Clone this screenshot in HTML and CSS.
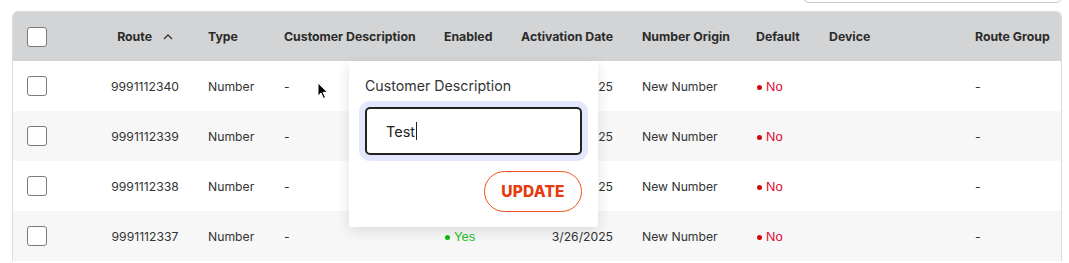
FILE: index.html
```html
<!DOCTYPE html>
<html lang="en">
<head>
    <meta charset="UTF-8">
    <meta name="viewport" content="width=device-width, initial-scale=1.0">
    <title>Routes</title>
    <link rel="stylesheet" href="styles.css">
</head>
<body>
    <div class="page">
        <div class="toolbar">
            <div class="search"></div>
        </div>

        <div class="routes">
            <div class="row head">
                <div class="cell check"><span class="box"></span></div>
                <div class="cell route">Route
                    <svg class="sort" width="10" height="6" viewBox="0 0 10 6"><path d="M1 5 L5 1 L9 5" fill="none" stroke="#333" stroke-width="1.3"/></svg>
                </div>
                <div class="cell type">Type</div>
                <div class="cell">Customer Description</div>
                <div class="cell">Enabled</div>
                <div class="cell date">Activation Date</div>
                <div class="cell">Number Origin</div>
                <div class="cell">Default</div>
                <div class="cell">Device</div>
                <div class="cell">Route Group</div>
            </div>
            <div class="row">
                <div class="cell check"><span class="box"></span></div>
                <div class="cell route">9991112340</div>
                <div class="cell type">Number</div>
                <div class="cell">-</div>
                <div class="cell"><span class="yes">Yes</span></div>
                <div class="cell date">3/26/2025</div>
                <div class="cell">New Number</div>
                <div class="cell"><span class="no">No</span></div>
                <div class="cell"></div>
                <div class="cell">-</div>
            </div>
            <div class="row">
                <div class="cell check"><span class="box"></span></div>
                <div class="cell route">9991112339</div>
                <div class="cell type">Number</div>
                <div class="cell">-</div>
                <div class="cell"><span class="yes">Yes</span></div>
                <div class="cell date">3/26/2025</div>
                <div class="cell">New Number</div>
                <div class="cell"><span class="no">No</span></div>
                <div class="cell"></div>
                <div class="cell">-</div>
            </div>
            <div class="row">
                <div class="cell check"><span class="box"></span></div>
                <div class="cell route">9991112338</div>
                <div class="cell type">Number</div>
                <div class="cell">-</div>
                <div class="cell"><span class="yes">Yes</span></div>
                <div class="cell date">3/26/2025</div>
                <div class="cell">New Number</div>
                <div class="cell"><span class="no">No</span></div>
                <div class="cell"></div>
                <div class="cell">-</div>
            </div>
            <div class="row">
                <div class="cell check"><span class="box"></span></div>
                <div class="cell route">9991112337</div>
                <div class="cell type">Number</div>
                <div class="cell">-</div>
                <div class="cell"><span class="yes">Yes</span></div>
                <div class="cell date">3/26/2025</div>
                <div class="cell">New Number</div>
                <div class="cell"><span class="no">No</span></div>
                <div class="cell"></div>
                <div class="cell">-</div>
            </div>
        </div>

        <!-- popover for editing the description -->
        <div class="popover">
            <div class="pop-label">Customer Description</div>
            <div class="pop-input">Test<span class="caret"></span></div>
            <div class="pop-actions">
                <button class="update">UPDATE</button>
            </div>
        </div>

        <svg class="cursor" width="12" height="18" viewBox="0 0 12 18">
            <path d="M1 1 L1 14 L4 11 L6.5 16.5 L8.5 15.5 L6 10.3 L10.5 10.3 Z" fill="#000" stroke="#fff" stroke-width="1"/>
        </svg>
    </div>
</body>
</html>
```

FILE: styles.css
```css
* {margin: 0; padding: 0; box-sizing: border-box;}
body {
    font-family: Inter, "Noto Sans", sans-serif;
    font-size: 12.2px;
    color: #333;
    background: #fff;
    overflow: hidden;
}
.page {
    position: relative;
    width: 1069px;
    height: 263px;
}
.toolbar {
    display: flex;
    justify-content: flex-end;
    padding-right: 7px;
}
.search {
    width: 259px;
    height: 36px;
    margin-top: -33px;
    border: 1px solid #c9c9c9;
    border-radius: 6px;
}
.routes {
    margin: 8px 0 0 12px;
    width: 1050px;
    border: 1px solid #dcdcdc;
    border-bottom: 0;
    border-radius: 6px 6px 0 0;
    overflow: hidden;
}
.row {
    display: grid;
    grid-template-columns: 87px 90px 94px 160px 77px 121px 114px 73px 146px 1fr;
    height: 50px;
    align-items: center;
    background: #fff;
}
.row:nth-child(odd) {
    background: #f7f7f7;
}
.row.head {
    height: 49px;
    background: #d3d4d5;
    font-size: 12.3px;
    font-weight: 700;
    color: #2b2b2b;
}
.cell {
    white-space: nowrap;
}
.check {
    padding-left: 14px;
    display: flex;
}
.box {
    width: 20px;
    height: 20px;
    border: 1px solid #7a7a7a;
    border-radius: 3px;
    background: #fff;
}
.route {
    text-align: center;
}
.sort {
    margin-left: 8px;
    vertical-align: 1px;
}
.type {
    padding-left: 18px;
}
.date {
    text-align: right;
    padding-right: 29px;
}
.yes, .no {
    font-family: "Liberation Sans", Arial, sans-serif;
    font-size: 13px;
}
.yes {
    color: #1ec21e;
}
.no {
    color: #e4022a;
}
.yes::before, .no::before {
    content: "";
    display: inline-block;
    width: 5px;
    height: 5px;
    border-radius: 50%;
    margin: 0 4px 1px 1px;
}
.yes::before {background: #0fb80f;}
.no::before {background: #cc0a0a;}

.popover {
    position: absolute;
    left: 349px;
    top: 61px;
    width: 249px;
    padding: 15px 16px 15px 16px;
    background: #fff;
    border-radius: 2px;
    box-shadow: 0 4px 14px rgba(0, 0, 0, .12);
}
.pop-label {
    font-size: 14.2px;
    line-height: 20px;
    color: #333;
    margin-bottom: 11px;
}
.pop-input {
    width: 217px;
    height: 48px;
    border: 2px solid #222;
    border-radius: 5px;
    box-shadow: 0 0 0 6px #e2e7fd;
    padding-left: 19px;
    display: flex;
    align-items: center;
    font-size: 14.5px;
    color: #222;
}
.caret {
    display: inline-block;
    width: 1px;
    height: 18px;
    background: #222;
    margin-left: 1px;
}
.pop-actions {
    display: flex;
    justify-content: flex-end;
    margin-top: 16px;
}
.update {
    width: 98px;
    height: 41px;
    border: 1px solid #f0501e;
    border-radius: 21px;
    background: #fff;
    color: #e63b0e;
    font-family: Inter, "Noto Sans", sans-serif;
    font-size: 15.5px;
    font-weight: 800;
    letter-spacing: .2px;
}
.cursor {
    position: absolute;
    left: 317px;
    top: 82px;
}
```
